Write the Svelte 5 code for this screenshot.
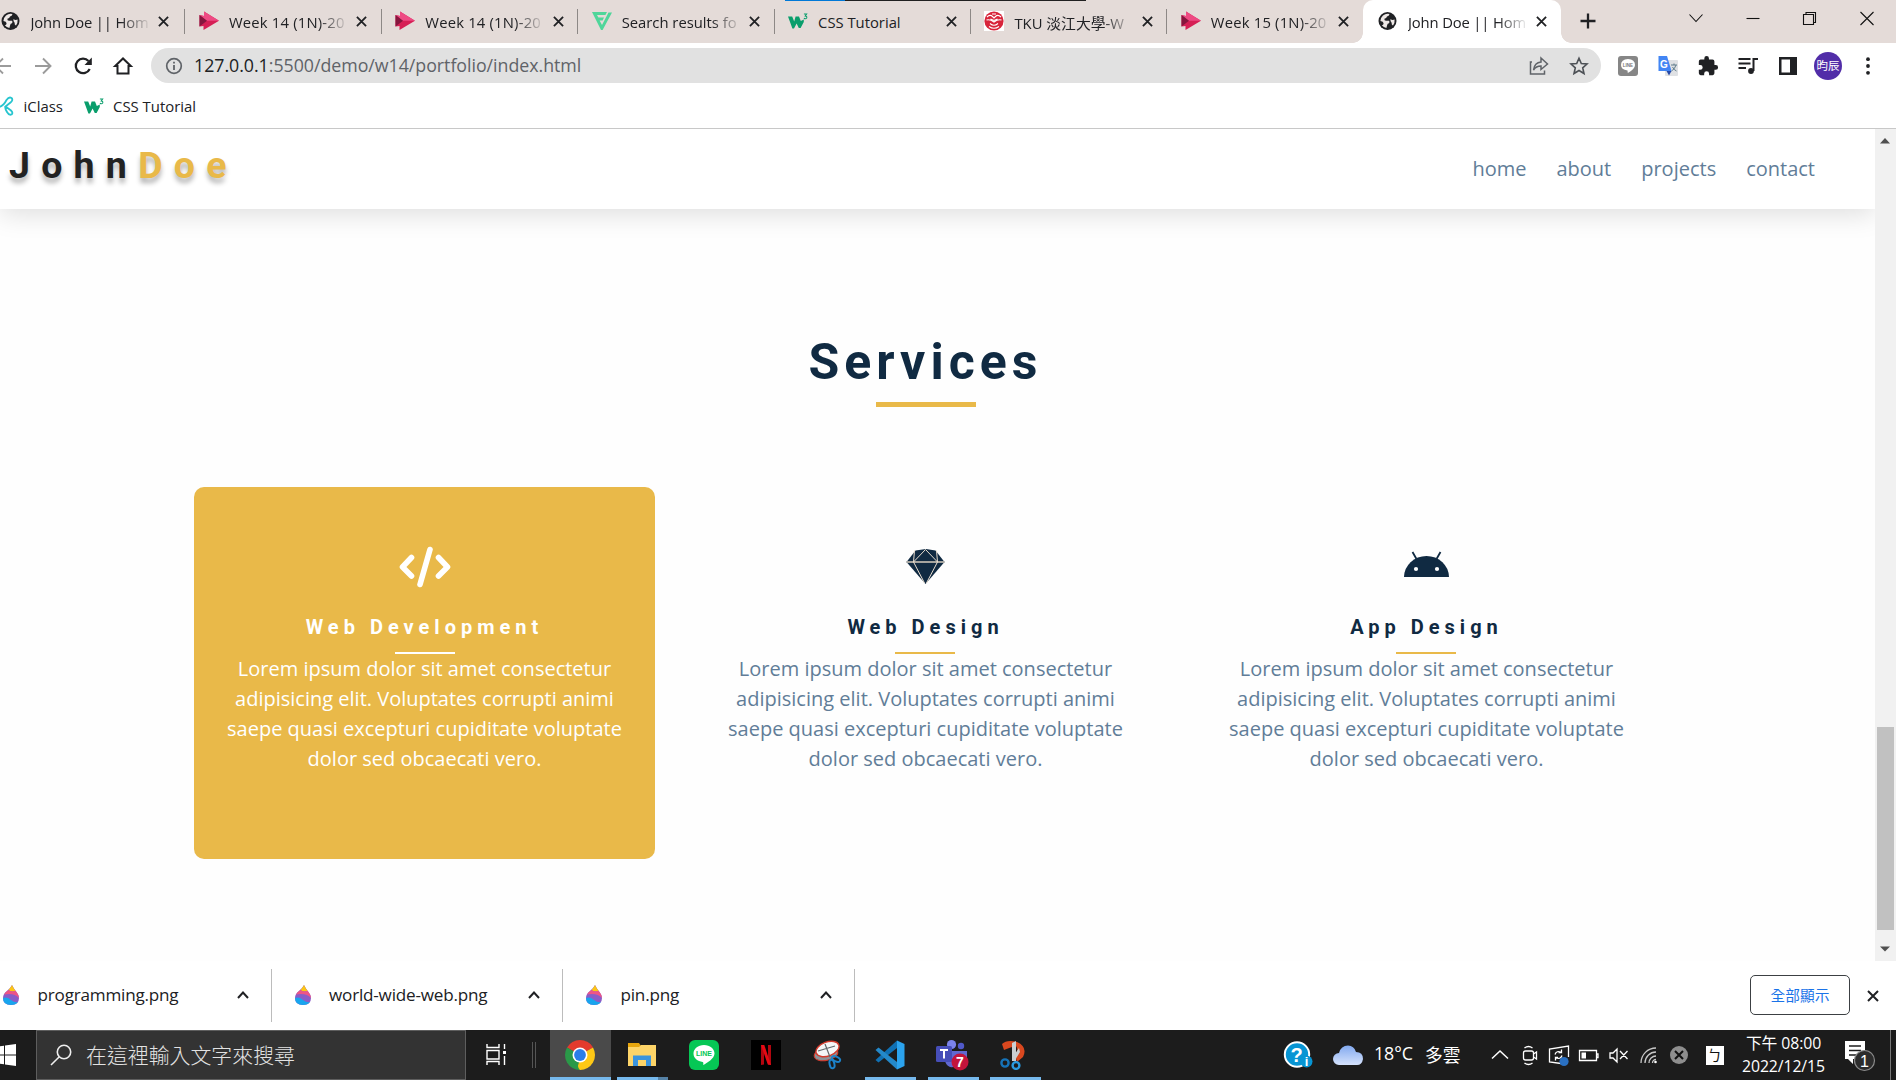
<script>
  const tabs = [
    { icon: 'globe', title: 'John Doe || Hom' },
    { icon: 'play', title: 'Week 14 (1N)-20' },
    { icon: 'play', title: 'Week 14 (1N)-20' },
    { icon: 'flag', title: 'Search results fo' },
    { icon: 'w3', title: 'CSS Tutorial', short: true },
    { icon: 'tku', title: 'TKU 淡江大學-W' },
    { icon: 'play', title: 'Week 15 (1N)-20' },
    { icon: 'globe', title: 'John Doe || Hom', active: true }
  ];
  const links = ['home', 'about', 'projects', 'contact'];
  const blurb =
    'Lorem ipsum dolor sit amet consectetur adipisicing elit. Voluptates corrupti animi saepe quasi excepturi cupiditate voluptate dolor sed obcaecati vero.';
  const services = [
    { icon: 'code', title: 'Web Development', hot: true },
    { icon: 'gem', title: 'Web Design' },
    { icon: 'android', title: 'App Design' }
  ];
  const downloads = ['programming.png', 'world-wide-web.png', 'pin.png'];
  const apps = [
    { name: 'chrome', state: 'focused' },
    { name: 'explorer', state: 'stacked' },
    { name: 'line' },
    { name: 'netflix' },
    { name: 'snip' },
    { name: 'vscode', state: 'open' },
    { name: 'teams', state: 'open' },
    { name: 'sketch', state: 'open' }
  ];
  const tray = ['up', 'meet', 'sync', 'battery', 'mute', 'wifi', 'blocked'];
</script>

{#snippet cross(size)}
  <svg width={size} height={size} viewBox="0 0 12 12"><path d="M1 1L11 11M11 1L1 11" stroke="#202124" stroke-width="2" fill="none" /></svg>
{/snippet}

{#snippet w3()}
  <svg width="20" height="20" viewBox="0 0 20 20">
    <path d="M0 5.500H4.200L6.200 10.500L7.600 5.500H11L12.800 10L15.800 8.500V11L12.600 17H10.800L8.600 12.500L6 17.500H4.400Z" fill="#0a9e6c" />
    <path d="M15.900 3H18.600L17.200 5Q19.200 5.300 18.700 7Q17.600 8.300 15.900 7.300" fill="none" stroke="#0a9e6c" stroke-width="1.100" />
  </svg>
{/snippet}

{#snippet favicon(name)}
  {#if name === 'globe'}
    <svg width="20" height="20" viewBox="0 0 20 20">
      <circle cx="9.500" cy="10" r="9" fill="#202124" />
      <path d="M2.400 10Q2.600 6.500 5 4.400Q8 2 11.500 3Q11 5 9 5.600Q8.600 7.400 6.400 7.800Q6 9.600 8 9.800H11Q12 11 11 12.200Q9.400 12.400 9.200 14L8.400 16.900Q5.500 16.500 3.800 14.200Q5.500 14 5.600 12.200Q5.400 10.400 2.400 10ZM12.500 8Q14 9.600 16.600 8.600Q17 12 15 14.500Q13.500 14.200 13.600 11.800Q12 10.200 12.500 8Z" fill="#eee8e6" />
    </svg>
  {:else if name === 'play'}
    <svg width="20" height="20" viewBox="0 0 20 20">
      <path d="M0.500 4L5 5V0.500L20 9.800L4.500 19V15L0.500 15.500Z" fill="#d61f55" />
      <path d="M5 0.500L20 9.800H7.500L0.500 4L5 5Z" fill="#ee4a83" />
      <path d="M0.500 4L8 9.800L0.500 15.500Z" fill="#86163e" />
    </svg>
  {:else if name === 'flag'}
    <svg width="20" height="20" viewBox="0 0 20 20">
      <path d="M0 1H15L13.400 4H5L6.400 6.600H12L10.600 9.400H7.600L10 14L16.500 1.500H20L10.600 19H9Z" fill="#4fd69a" />
    </svg>
  {:else if name === 'w3'}
    {@render w3()}
  {:else}
    <svg width="20" height="20" viewBox="0 0 20 20">
      <rect width="20" height="20" fill="#fff" />
      <circle cx="10" cy="10" r="9.600" fill="#d8243a" />
      <path d="M3 6Q6 3 8.500 5.500L10 7L11.500 5.500Q14 3 17 6M2.500 9Q6 8 10 11Q14 8 17.500 9M6.500 8L10 9.500L13.500 8M6 12.500Q10 16 14 12.500M5 15.500Q10 19 15 15.500M8 3H12" fill="none" stroke="#fff" stroke-width="1.100" />
    </svg>
  {/if}
{/snippet}

{#snippet appIcon(name)}
  {#if name === 'chrome'}
    <svg width="30" height="30" viewBox="0 0 30 30">
      <path d="M15 15L2.010 7.500A15 15 0 0 1 27.990 7.500Z" fill="#e33b2e" />
      <path d="M15 15L27.990 7.500A15 15 0 0 1 15 30L10 27Z" fill="#fdc816" />
      <path d="M15 15L15 30A15 15 0 0 1 2.010 7.500Z" fill="#2a9948" />
      <path d="M15 7.500H28A15 15 0 0 0 22 1.800L9 4.300Z" fill="#e33b2e" />
      <path d="M21.500 18.700L15 30Q11 26 15 21Z" fill="#fdc816" />
      <circle cx="15" cy="15" r="7.500" fill="#fff" />
      <circle cx="15" cy="15" r="5.900" fill="#2a7de9" />
    </svg>
  {:else if name === 'explorer'}
    <svg width="30" height="30" viewBox="0 0 30 30">
      <path d="M1 3H12L14 6H29V26H1Z" fill="#e6a50d" />
      <path d="M1 7H12L14 5H29V26H1Z" fill="#fdd468" />
      <path d="M6 26V15.500H24V26H19V20H11V26Z" fill="#3b94dd" />
    </svg>
  {:else if name === 'line'}
    <svg width="30" height="30" viewBox="0 0 30 30">
      <rect width="30" height="30" rx="6" fill="#06c755" />
      <path d="M15 5C9 5 4.500 8.800 4.500 13.500C4.500 18 8.500 21.300 13.700 21.900C14.700 22.200 14.300 23.500 14.200 25C18 23 25.500 18.500 25.500 13.500C25.500 8.800 21 5 15 5Z" fill="#fff" />
      <text x="15" y="16" class="line-word">LINE</text>
    </svg>
  {:else if name === 'netflix'}
    <svg width="30" height="30" viewBox="0 0 30 30">
      <rect width="30" height="30" fill="#000" />
      <path d="M10 5H13V24.500L10 25ZM17 5H20V25L17 24.500Z" fill="#b1060f" />
      <path d="M10 5H13.300L20 25L16.800 24.600Z" fill="#e50914" />
    </svg>
  {:else if name === 'snip'}
    <svg width="30" height="30" viewBox="0 0 30 30">
      <ellipse cx="13" cy="14" rx="12" ry="6.500" transform="rotate(-12 13 14)" fill="#8d9399" stroke="#d33a2c" />
      <ellipse cx="14.500" cy="9" rx="12" ry="7" transform="rotate(-20 14.500 9)" fill="#f5f6f7" stroke="#d33a2c" stroke-width="1.400" />
      <path d="M5 11L22 6M12 4L17 17" stroke="#62676b" stroke-width="1.200" />
      <ellipse cx="23" cy="19" rx="4.400" ry="2.400" transform="rotate(25 23 19)" fill="none" stroke="#1c82c9" stroke-width="2" />
      <ellipse cx="19" cy="24" rx="2.400" ry="4.400" transform="rotate(-12 19 24)" fill="none" stroke="#1c82c9" stroke-width="2" />
    </svg>
  {:else if name === 'vscode'}
    <svg width="30" height="30" viewBox="0 0 30 30">
      <path d="M22 8L3.500 22.500L0.500 20L22 0.500Z" fill="#1070b3" />
      <path d="M22 22L3.500 7.600L0.500 10L22 29.500Z" fill="#2489ca" />
      <path d="M22 0.500L29.500 4V26L22 29.500Z" fill="#2ba3ee" />
    </svg>
  {:else if name === 'teams'}
    <svg width="34" height="32" viewBox="0 0 34 32">
      <circle cx="16.500" cy="5.500" r="4.600" fill="#7b83eb" />
      <circle cx="26" cy="7" r="3.200" fill="#5059c9" />
      <path d="M10 12H32V19Q30 25 24 24Q20 29 15 28Q10 26 10 20Z" fill="#6068d0" />
      <rect x="1" y="7" width="16" height="16" rx="1.500" fill="#464eb8" />
      <path d="M5 11H13M9 11V19.500" stroke="#fff" stroke-width="2" />
      <circle cx="25" cy="23" r="8.500" fill="#c4143b" />
      <text x="25" y="28" class="badge-num">7</text>
    </svg>
  {:else}
    <svg width="30" height="30" viewBox="0 0 30 30">
      <path d="M3 4Q8 -1 18 2Q29 7 24 17L18 22L16 15Q20 10 17 6Q12 7 5 10Z" fill="#d9481f" />
      <path d="M13 3L17 1V21H13ZM13 18L20 8L21 12L16 20Z" fill="#c9ced2" />
      <circle cx="6" cy="23" r="3.600" fill="none" stroke="#1673b8" stroke-width="2.400" />
      <circle cx="17" cy="25.500" r="3.400" fill="none" stroke="#2a9be0" stroke-width="2.400" />
    </svg>
  {/if}
{/snippet}

{#snippet trayIcon(name)}
  <svg width="24" height="24" viewBox="0 0 24 24" fill="none" stroke="#fff" stroke-width="1.300">
    {#if name === 'up'}
      <path d="M4 15.500L12 8L20 15.500" stroke-width="1.500" />
    {:else if name === 'meet'}
      <rect x="5.500" y="8" width="10" height="9" rx="2" /><path d="M15.500 11L18.500 9V16L15.500 14M6.500 5Q10.500 2 14.500 5M6.500 20Q10.500 23 14.500 20" />
    {:else if name === 'sync'}
      <path d="M14 20.500L2.500 19V6L21.500 3V14M8 11.500Q9.500 7 14.500 9.500V6.500M14.500 9.500H11.500M15 12.500Q13.500 17 8.500 14.500V17.500M8.500 14.500H11" />
      <circle cx="17" cy="18.500" r="4.600" fill="#2a70c2" stroke="none" />
    {:else if name === 'battery'}
      <path d="M2.500 7.500H19.500V17.500H2.500ZM19.500 11H21V14.500H19.500" /><path d="M4.500 9.500H9V15.500H4.500Z" fill="#fff" stroke="none" />
    {:else if name === 'mute'}
      <path d="M3 10H6L10 6V19L6 15H3ZM13 8L20.500 16M20.500 8L13 16" />
    {:else if name === 'wifi'}
      <path d="M4 20A15 15 0 0 1 19 5M8 20A11 11 0 0 1 19 9M12 20A7 7 0 0 1 19 13M15.500 20A3.500 3.500 0 0 1 19 16.500" stroke="#c8c8c8" /><circle cx="18.500" cy="19" r="1.300" fill="#fff" stroke="none" />
    {:else}
      <circle cx="12" cy="12" r="9" fill="#8e8e8e" stroke="none" /><path d="M8 8L16 16M16 8L8 16" stroke="#111" stroke-width="2" />
    {/if}
  </svg>
{/snippet}

<div class="screen">
  <div class="edge"><i></i><b></b></div>
  <header class="tabstrip">
    {#each tabs as tab}
      <div class="tab" class:active={tab.active}>
        {@render favicon(tab.icon)}
        <span class="tab-title {tab.icon}" class:faded={!tab.short}>{tab.title}</span>
        {@render cross(11)}
      </div>
    {/each}
    <svg class="plus" width="16" height="16" viewBox="0 0 16 16"><path d="M8 0.500V15.500M0.500 8H15.500" stroke="#202124" stroke-width="2.300" /></svg>
    <div class="window-controls">
      <svg width="16" height="16" viewBox="0 0 16 16"><path d="M1.500 4.500L8 11.500L14.500 4.500" /></svg>
      <svg width="16" height="16" viewBox="0 0 16 16"><path d="M1.500 8.500H14.500" /></svg>
      <svg width="16" height="16" viewBox="0 0 16 16"><path d="M1.500 4.500H11.500V14.500H1.500ZM4 4.500V2.500H13.500V12.500H11.500" /></svg>
      <svg width="16" height="16" viewBox="0 0 16 16"><path d="M1.500 2L14.500 15M14.500 2L1.500 15" /></svg>
    </div>
  </header>

  <div class="toolbar">
    <div class="nav-buttons">
      <svg width="24" height="24" viewBox="0 0 24 24" stroke="#9b9b9b"><path d="M20 12H5M12 4.500L4.500 12L12 19.500" /></svg>
      <svg width="24" height="24" viewBox="0 0 24 24" stroke="#9b9b9b"><path d="M4 12H19M12 4.500L19.500 12L12 19.500" /></svg>
      <svg width="24" height="24" viewBox="0 0 24 24" stroke="#202124"><path d="M18.700 15A7.300 7.300 0 1 1 17.500 7" stroke-width="2.200" /><path d="M20.800 3.500V11H13.500Z" fill="#202124" stroke="none" /></svg>
      <svg width="24" height="24" viewBox="0 0 24 24" stroke="#202124"><path d="M4.200 12L12 4.500L19.800 12H17.500V19.500H6.500V12Z" stroke-width="2" /></svg>
    </div>
    <div class="omnibox">
      <svg width="18" height="18" viewBox="0 0 18 18"><circle cx="9" cy="9" r="7.300" fill="none" stroke="#5f6368" stroke-width="1.700" /><path d="M9 8V13M9 4.800V6.600" stroke="#5f6368" stroke-width="1.800" /></svg>
      <span class="url"><em>127.0.0.1</em>:5500/demo/w14/portfolio/index.html</span>
      <svg class="share" width="20" height="20" viewBox="0 0 20 20" fill="none" stroke="#5f6368" stroke-width="1.500"><path d="M3 6H1.500V18H15.500V14.500M12 2L18.500 8L12 13.500V10Q7 10 4.500 14Q5.500 6.500 12 6Z" /></svg>
      <svg width="20" height="20" viewBox="0 0 20 20" fill="none" stroke="#4d5156" stroke-width="1.600"><path d="M10 2.200L12.300 7.500L18 8L13.700 11.800L15 17.500L10 14.500L5 17.500L6.300 11.800L2 8L7.700 7.500Z" /></svg>
    </div>
    <div class="extensions">
      <svg width="22" height="22" viewBox="0 0 22 22"><rect x="1" y="1" width="20" height="20" rx="3" fill="#868686" /><path d="M11 4Q4 4.500 4 10Q4 14.500 10.500 15.600L10.800 18Q18 14 18 10Q18 4.500 11 4Z" fill="#fff" /><text x="11" y="12" class="ext-word">LINE</text></svg>
      <svg width="22" height="22" viewBox="0 0 22 22"><rect x="8" y="5" width="13" height="16" rx="1" fill="#dfe1e4" /><path d="M1.500 1H10L14.500 16H1.500Z" fill="#4285f4" /><path d="M9.500 16H14.500L12 20.500Z" fill="#2649a8" /><text x="6.800" y="12.500" class="g-word">G</text><path d="M14 10H20M17 8.500V10M19 10Q18 14 14.500 16M15.500 12Q17 15 19.500 16" stroke="#607d8b" fill="none" /></svg>
      <svg width="22" height="22" viewBox="0 0 24 24"><path d="M20.500 11H19V7a2 2 0 0 0-2-2h-4V3.500a2.500 2.500 0 0 0-5 0V5H4a2 2 0 0 0-2 2v3.800h1.500a2.700 2.700 0 0 1 0 5.400H2V20a2 2 0 0 0 2 2h3.800v-1.500a2.700 2.700 0 0 1 5.400 0V22H17a2 2 0 0 0 2-2v-4h1.500a2.500 2.500 0 0 0 0-5z" fill="#202124" /></svg>
      <svg width="22" height="22" viewBox="0 0 22 22" fill="none" stroke="#202124" stroke-width="2"><path d="M1.500 4H13.500M1.500 8.500H13.500M1.500 13H9M16.500 16V4H21" /><circle cx="14" cy="16" r="2.900" fill="#202124" stroke="none" /></svg>
      <svg width="22" height="22" viewBox="0 0 22 22"><path d="M2 2H20V20H2ZM4.500 4.500V17.500H13V4.500Z" fill="#202124" fill-rule="evenodd" /></svg>
      <span class="avatar">昀辰</span>
      <svg width="22" height="22" viewBox="0 0 22 22" fill="#202124"><circle cx="11" cy="4.200" r="1.900" /><circle cx="11" cy="11" r="1.900" /><circle cx="11" cy="17.800" r="1.900" /></svg>
    </div>
  </div>

  <div class="bookmarks">
    <svg width="16" height="20" viewBox="0 0 16 20" fill="none" stroke="#27c5cf" stroke-width="1.800"><path d="M0 11Q5 11 8.500 4Q11 0.500 13.500 2Q15.500 4 12.500 6.500L7.500 10.500L13 14.500Q15.500 17 13.500 18.500Q11 19.500 9 16Q6.500 12 7.500 10.500" /></svg>
    <span class="bm first">iClass</span>
    {@render w3()}
    <span class="bm">CSS Tutorial</span>
  </div>

  <main class="viewport">
    <div class="page">
      <nav class="site-nav">
        <h3 class="logo">John<span>Doe</span></h3>
        <div class="links">{#each links as link}<a href="#{link}">{link}</a>{/each}</div>
      </nav>
      <section class="services">
        <div class="heading"><h2>Services</h2><hr /></div>
        <div class="cards">
          {#each services as s}
            <article class:hot={s.hot}>
              <div class="card-icon">
                {#if s.icon === 'code'}
                  <svg width="52" height="42" viewBox="0 0 52 42" fill="none" stroke="#fff" stroke-linecap="round" stroke-linejoin="round" stroke-width="5.600"><path d="M12.500 11.500L3.500 21L12.500 30M39.500 11.500L48.500 21L39.500 30M31 3.500L21 38.500" /></svg>
                {:else if s.icon === 'gem'}
                  <svg width="40" height="42" viewBox="0 0 40 42"><path d="M9.500 4.500L20 3L29.500 4.500L38.500 16L19.500 38L0.500 16Z" fill="#102a42" /><path d="M0.500 16H38.500" stroke="#a5a49f" stroke-width="1.800" /><path d="M8.500 4.500L7.500 16L19.500 3.500L31.500 16L30.500 4.500M7.500 16L18.500 37M31.500 16L20.500 37" fill="none" stroke="#e8ddcf" stroke-width="1" /></svg>
                {:else}
                  <svg width="46" height="42" viewBox="0 0 46 42"><path d="M0 31A22.500 21 0 0 1 45 31Z" fill="#102a42" /><path d="M8.500 6L12.500 13M36.500 6L32.500 13" stroke="#102a42" stroke-width="1.800" /><circle cx="12" cy="23" r="2.100" fill="#fff" /><circle cx="33" cy="23" r="2.100" fill="#fff" /></svg>
                {/if}
              </div>
              <h4>{s.title}</h4>
              <hr />
              <p>{blurb}</p>
            </article>
          {/each}
        </div>
      </section>
    </div>
    <div class="scrollbar">
      <svg width="10" height="6" viewBox="0 0 10 6"><path d="M0 5.500H10L5 0Z" fill="#505050" /></svg>
      <div class="thumb"></div>
      <svg width="10" height="6" viewBox="0 0 10 6"><path d="M0 0.500H10L5 5.500Z" fill="#505050" /></svg>
    </div>
  </main>

  <div class="downloads">
    {#each downloads as file}
      <div class="download">
        <svg width="18" height="22" viewBox="0 0 18 22">
          <path d="M10 1Q12 5 14.500 8Q17 11 17 14Q17 21 9 21Q1 21 1 14Q1 10 5 7Q8.500 4 10 1Z" fill="#8a5cc7" />
          <path d="M10 1Q11.500 4.500 13.500 6.800Q10 8.500 6.500 5.900Q9 3.500 10 1Z" fill="#fdc614" />
          <path d="M6.500 5.900Q10 8.500 13.500 6.800Q17 11 17 14Q12 8.500 2 10.500Q3 8 6.500 5.900Z" fill="#ee5586" />
          <path d="M1 14Q5 12.500 9 16Q13 19 16 18Q14 21 9 21Q1 21 1 14Z" fill="#18a5ee" />
        </svg>
        <span>{file}</span>
        <svg width="12" height="8" viewBox="0 0 12 8"><path d="M1 7L6 1.500L11 7" fill="none" stroke="#202124" stroke-width="2" /></svg>
      </div>
    {/each}
    <button class="show-all">全部顯示</button>
    {@render cross(12)}
  </div>

  <footer class="taskbar">
    <div class="start"><svg width="22" height="22" viewBox="0 0 22 22"><path d="M0 3L10 1.700V10.500H0ZM11 1.500L22 0V10.500H11ZM0 11.500H10V20.300L0 19ZM11 11.500H22V22L11 20.500Z" fill="#fff" /></svg></div>
    <div class="search">
      <svg width="22" height="22" viewBox="0 0 22 22" fill="none" stroke="#eee" stroke-width="1.600"><circle cx="14" cy="8" r="6.700" /><path d="M9.300 12.800L1 21" /></svg>
      <span>在這裡輸入文字來搜尋</span>
    </div>
    <div class="taskview"><svg width="21" height="24" viewBox="0 0 21 24" fill="none" stroke="#fff" stroke-width="1.400"><path d="M1 1V4.500H13V1M1 22V18.500H13V22M1 7.500H13V16H1ZM18.500 1V6M18.500 13V22" /><path d="M17 8H20V11H17Z" fill="#fff" stroke="none" /></svg></div>
    <div class="grip"></div>
    <div class="apps">
      {#each apps as app}<div class="app {app.state ?? ''}">{@render appIcon(app.name)}</div>{/each}
    </div>
    <div class="status">
      <svg class="help" width="30" height="28" viewBox="0 0 30 28"><circle cx="14" cy="13.500" r="12.200" fill="#0795d4" stroke="#fff" stroke-width="2" /><text x="13.500" y="21" class="q-word">?</text><circle cx="23.500" cy="20.500" r="6" fill="#0795d4" /><text x="23.500" y="25" class="i-word">i</text></svg>
      <svg class="cloud" width="30" height="20" viewBox="0 0 30 20"><defs><linearGradient id="sky" x2="0" y2="1"><stop stop-color="#82a9ef" /><stop offset="1" stop-color="#d5e2fc" /></linearGradient></defs><path d="M6 20A6 6 0 0 1 6 8Q8 0.500 15 0.500Q21 0.500 23 7Q30 7 30 14Q29 20 24 20Z" fill="url(#sky)" /></svg>
      <span class="weather"><b>18°C</b><b>多雲</b></span>
      <div class="tray">{#each tray as icon}<span>{@render trayIcon(icon)}</span>{/each}</div>
      <span class="ime">ㄅ</span>
      <span class="clock"><b>下午 08:00</b><b>2022/12/15</b></span>
      <span class="notice">
        <svg width="32" height="34" viewBox="0 0 32 34"><path d="M1 3H21V21H9V26L4 21H1Z" fill="#fff" /><path d="M5 8H17M5 12.500H17M5 17H12" stroke="#1c1c1c" stroke-width="1.500" /><circle cx="20.500" cy="22.500" r="10" fill="#2c2c2c" stroke="#8b8b8b" stroke-width="1.200" /><text x="20.500" y="28.500" class="count">1</text></svg>
      </span>
    </div>
  </footer>
</div>

<style>
  :global(body) { margin: 0; overflow: hidden; }
  .screen {
    position: relative; width: 1896px; height: 1080px; overflow: hidden; display: flex; flex-direction: column;
    background: #fff; font-family: 'Open Sans', 'Noto Sans CJK TC', sans-serif; color: #202124;
  }
  .screen * { box-sizing: border-box; }
  svg { flex: none; display: block; }
  svg text { font-family: 'Liberation Sans', sans-serif; font-weight: 700; text-anchor: middle; }

  .edge { position: absolute; z-index: 3; top: 0; left: 785px; width: 301px; height: 1px; display: flex; }
  .edge i { width: 60px; background: #0078d7; }
  .edge b { flex: 1; background: #202020; }

  .tabstrip { height: 43px; flex: none; background: #e4dbd8; display: flex; align-items: center; }
  .tab {
    position: relative; width: 196.400px; flex: none; height: 43px; display: flex; align-items: center;
    padding: 0 13.500px 1px 13.500px;
  }
  .tab:first-child { margin-left: -13px; width: 198.400px; }
  .tab:not(:nth-last-child(-n + 4))::after {
    content: ''; position: absolute; right: 0; top: 9px; width: 1px; height: 25px; background: #8d8886;
  }
  .tab-title {
    width: 118px; margin-left: 10px; margin-right: 9.500px; white-space: nowrap; font-size: 14.800px; padding-top: 2px;
  }
  .tab-title.play { letter-spacing: 0.200px; }
  .tab-title.globe { letter-spacing: -0.150px; }
  .tab-title.faded {
    -webkit-mask-image: linear-gradient(90deg, #000 76%, transparent 102%);
    mask-image: linear-gradient(90deg, #000 76%, transparent 102%);
  }
  .tab.active { width: 197.600px; margin-left: -0.700px; background: #fff; border-radius: 10px 10px 0 0; padding-left: 15px; }
  .tab.active::before, .tab.active::after {
    content: ''; position: absolute; bottom: 0; width: 10px; height: 10px;
  }
  .tab.active::before { left: -10px; background: radial-gradient(circle at 0 0, #e4dbd8 9.500px, #fff 10px); }
  .tab.active::after { right: -10px; background: radial-gradient(circle at 100% 0, #e4dbd8 9.500px, #fff 10px); }
  .plus { margin: 0 auto 1px 19px; }
  .window-controls { display: flex; gap: 41px; margin: 0 21px 7px 0; }
  .window-controls svg { fill: none; stroke: #111; stroke-width: 1.100; }

  .toolbar { height: 45px; flex: none; display: flex; align-items: center; }
  .nav-buttons { display: flex; gap: 16px; width: 151px; margin-left: -9px; flex: none; }
  .nav-buttons + .omnibox { margin-left: 9px; }
  .nav-buttons svg { fill: none; stroke-width: 1.900; }
  .omnibox {
    width: 1450px; height: 35px; border-radius: 18px; background: #e1e1e1; display: flex; align-items: center;
    padding: 0 12.500px 0 13.500px; flex: none;
  }
  .url { margin: 0 auto 2px 11.500px; font-size: 17.800px; letter-spacing: -0.030px; color: #5f6368; white-space: nowrap; }
  .url em { font-style: normal; color: #202124; }
  .share { margin-right: 20px; }
  .extensions { display: flex; align-items: center; gap: 18px; margin-left: 16px; }
  .avatar {
    width: 28px; height: 28px; margin: 0 -3px; border-radius: 50%; background: #512da8; color: #fff; font-size: 11.500px;
    display: grid; place-items: center; white-space: nowrap; line-height: 1;
  }
  .ext-word { font-size: 4.500px; fill: #777; }
  .g-word { font-size: 10px; fill: #fff; }

  .bookmarks {
    height: 41px; flex: none; border-bottom: 1px solid #c8c8c8; display: flex; align-items: center; padding-bottom: 4px;
  }
  .bookmarks > svg:first-child { margin-left: -2px; }
  .bm { margin-left: 9.500px; font-size: 14.900px; white-space: nowrap; }
  .bm.first { width: 40px; margin-left: 9.500px; margin-right: 20px; }

  .viewport { height: 832px; flex: none; display: flex; }
  .page { width: 1875px; background: #fefefe; }
  .site-nav {
    height: 80px; background: #fff; box-shadow: 0 5px 25px rgba(0, 0, 0, 0.13); display: flex; align-items: center;
    padding: 0 60px 0 9px; clip-path: inset(0 0 -40px 0);
  }
  .logo {
    margin: 0 auto 7px 0; font: 700 37.500px/1 Roboto, sans-serif; letter-spacing: 11.250px; color: #222;
    text-shadow: 0 5px 5px rgba(0, 0, 0, 0.3);
  }
  .logo span { color: #e9b949; }
  .links { display: flex; gap: 30px; padding-bottom: 2px; }
  .links a { font-size: 20px; color: #617d98; text-decoration: none; }

  hr { border: 0; margin: 0; background: #e9b949; }
  h2, h4 { margin: 0; font-family: Roboto, sans-serif; font-weight: 700; color: #102a42; }
  .services { padding: 121px 0 0 194px; }
  .heading { width: 1463px; display: flex; flex-direction: column; align-items: center; }
  h2 { font-size: 50px; line-height: 64px; letter-spacing: 5px; }
  .heading hr { width: 100px; height: 5px; margin-top: 8px; }
  .cards { display: grid; grid-template-columns: repeat(3, 461px); gap: 40px; margin-top: 80px; }
  article { height: 372px; border-radius: 10px; display: flex; flex-direction: column; align-items: center; padding: 59px 30px 0; }
  .card-icon { height: 42px; }
  h4 { font-size: 20px; line-height: 26px; letter-spacing: 5px; margin-top: 26px; white-space: nowrap; }
  article hr { width: 60px; height: 2px; margin: 12px 1px 0 0; }
  p { margin: 0; font-size: 20px; line-height: 30px; color: #617d98; text-align: center; width: 401px; }
  .hot { background: #e9b949; }
  .hot h4, .hot p { color: #fff; }
  .hot hr { background: #fff; margin-right: 0; }

  .scrollbar { width: 21px; background: #f1f1f1; display: flex; flex-direction: column; align-items: center; padding: 9px 0.500px 9px 0; }
  .thumb { width: 17px; height: 203px; margin: auto 0 16px; background: #c1c1c1; }

  .downloads { height: 69px; flex: none; display: flex; align-items: center; padding-right: 17px; }
  .download {
    width: 291.500px; height: 53px; display: flex; align-items: center; padding: 0 22px 2px; border-right: 1.500px solid #bcbcbc;
  }
  .download:first-child { margin-left: -20px; }
  .download span { margin: 0 auto 0 17.500px; font-size: 17.100px; letter-spacing: -0.200px; }
  .show-all {
    margin: 0 17px 1px auto; width: 100px; height: 40px; border: 1px solid #3c4043; border-radius: 5px; background: #fff;
    color: #1a73e8; font: 14.700px/1 'Noto Sans CJK TC', sans-serif; padding: 0;
  }

  .taskbar { height: 50px; flex: none; background: #1c1c1c; color: #fff; display: flex; }
  .start { width: 36px; display: flex; align-items: center; }
  .start svg { margin-left: -6px; }
  .search {
    width: 430px; background: #333; border: 1px solid #5e5e5e; display: flex; align-items: center; padding-left: 13px;
    font: 300 20.900px/1 'Noto Sans CJK TC', sans-serif; color: #e2e2e2;
  }
  .search span { margin: 0 0 2px 14px; }
  .taskview { width: 66px; display: flex; align-items: center; padding-left: 20px; }
  .grip { width: 4px; height: 26px; margin: 12px 14px 0 0; border: solid #555; border-width: 0 1px; }
  .apps { display: flex; }
  .app { width: 62.100px; display: flex; align-items: center; justify-content: center; position: relative; padding-right: 3px; }
  .app.focused { background: linear-gradient(90deg, #4a4a4a 61px, #1c1c1c 61px); }
  .app.focused::after, .app.open::after, .app.stacked::after {
    content: ''; position: absolute; bottom: 0; left: 5px; width: 51px; height: 3px; background: #76b9ed;
  }
  .app.focused::after { left: 0; width: 61px; }
  .app.stacked::after { background: linear-gradient(90deg, #76b9ed 41px, #5682a6 41px); }
  .line-word { font-size: 7px; fill: #06c755; }
  .badge-num { font-size: 14px; fill: #fff; }

  .status { margin-left: auto; display: flex; align-items: center; }
  .help { margin-right: 36px; }
  .cloud { margin-right: 10.500px; margin-left: -16px; }
  .q-word { font-size: 20px; fill: #fff; }
  .i-word { font-size: 13px; fill: #fff; }
  b { font-weight: 400; }
  .weather { display: flex; gap: 12px; width: 111px; font-size: 17.800px; white-space: nowrap; margin-bottom: 2px; }
  .tray { display: flex; }
  .tray span { width: 29.800px; display: grid; place-items: center; }
  .ime {
    width: 18px; height: 19px; background: #fff; color: #111; font-size: 15px; line-height: 18px; text-align: center; margin-left: 12px;
  }
  .clock {
    width: 90px; margin-left: 15px; display: flex; flex-direction: column; text-align: center; font-size: 15.800px; line-height: 23px;
    letter-spacing: -0.100px; white-space: nowrap;
  }
  .notice { width: 47.500px; margin-left: 15px; margin-right: 5px; padding-top: 8px; border-right: 1px solid #777; height: 50px; }
  .count { font-size: 16px; font-weight: 400; fill: #fff; }
</style>
